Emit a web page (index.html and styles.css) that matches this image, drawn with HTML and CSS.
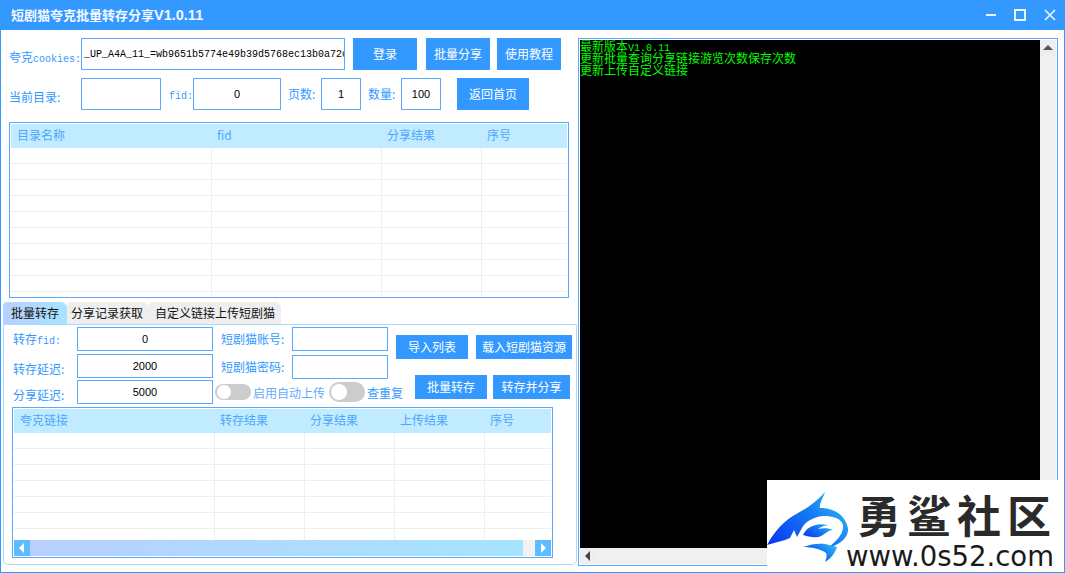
FILE: index.html
```html
<!DOCTYPE html>
<html lang="zh-CN">
<head>
<meta charset="utf-8">
<title>短剧猫夸克批量转存分享</title>
<link rel="stylesheet" href="styles.css">
</head>
<body>
<div class="window">
  <header class="titlebar">
    <h1 class="title">短剧猫夸克批量转存分享<span class="title-ver">V1.0.11</span></h1>
    <div class="winctl">
      <svg width="10" height="12" viewBox="0 0 10 12"><rect x="0" y="5" width="10" height="2" fill="#fff" opacity=".9"/></svg>
      <svg width="12" height="12" viewBox="0 0 12 12"><rect x="1" y="1" width="10" height="10" fill="none" stroke="#fff" stroke-width="2" opacity=".9"/></svg>
      <svg width="12" height="12" viewBox="0 0 12 12"><path d="M1 1L11 11M11 1L1 11" stroke="#fff" stroke-width="1.6" opacity=".9"/></svg>
    </div>
  </header>
  <main class="main">
    <section class="left">
      <div class="row">
        <label class="lbl lbl-a">夸克<span class="latin">cookies:</span></label>
        <input class="inp inp-cookie" value="_UP_A4A_11_=wb9651b5774e49b39d5768ec13b0a72c">
        <button class="btn b64 ml8">登录</button>
        <button class="btn b64 ml9">批量分享</button>
        <button class="btn b64 ml7">使用教程</button>
      </div>
      <div class="row row2">
        <label class="lbl lbl-a">当前目录:</label>
        <input class="inp w80" value="">
        <label class="lbl lbl-fid"><span class="latin">fid:</span></label>
        <input class="inp w88" value="0">
        <label class="lbl lbl-page">页数:</label>
        <input class="inp w40" value="1">
        <label class="lbl lbl-page">数量:</label>
        <input class="inp w40" value="100">
        <button class="btn b72 ml16">返回首页</button>
      </div>
      <div class="grid grid-top">
        <table class="tbl">
          <colgroup><col class="c201"><col class="c170"><col class="c100"><col></colgroup>
          <thead><tr><th>目录名称</th><th>fid</th><th>分享结果</th><th>序号</th></tr></thead>
          <tbody>
            <tr><td></td><td></td><td></td><td></td></tr>
            <tr><td></td><td></td><td></td><td></td></tr>
            <tr><td></td><td></td><td></td><td></td></tr>
            <tr><td></td><td></td><td></td><td></td></tr>
            <tr><td></td><td></td><td></td><td></td></tr>
            <tr><td></td><td></td><td></td><td></td></tr>
            <tr><td></td><td></td><td></td><td></td></tr>
            <tr><td></td><td></td><td></td><td></td></tr>
            <tr><td></td><td></td><td></td><td></td></tr>
            <tr><td></td><td></td><td></td><td></td></tr>
          </tbody>
        </table>
      </div>
      <nav class="tabs">
        <span class="tab tab-on t64">批量转存</span>
        <span class="tab t82">分享记录获取</span>
        <span class="tab t132">自定义链接上传短剧猫</span>
      </nav>
      <div class="panel">
        <div class="panel-top">
          <div class="col1">
            <div class="f"><label class="lbl lbl-f">转存<span class="latin">fid:</span></label><input class="inp w136 h24" value="0"></div>
            <div class="f f2"><label class="lbl lbl-f lbl-low">转存延迟:</label><input class="inp w136 h24" value="2000"></div>
            <div class="f f3"><label class="lbl lbl-f lbl-low">分享延迟:</label><input class="inp w136 h24" value="5000"></div>
          </div>
          <div class="col2">
            <div class="f"><label class="lbl lbl-acc">短剧猫账号:</label><input class="inp w96 h24" value=""></div>
            <div class="f f4"><label class="lbl lbl-acc">短剧猫密码:</label><input class="inp w96 h24" value=""></div>
            <div class="toggles">
              <span class="toggle"></span><span class="lbl tg-l1">启用自动上传</span>
              <span class="toggle toggle-lg"></span><span class="lbl tg-l2">查重复</span>
            </div>
          </div>
          <div class="col3">
            <div class="brow">
              <button class="btn b72 h24">导入列表</button>
              <button class="btn b96 h24 ml8">载入短剧猫资源</button>
            </div>
            <div class="brow brow2">
              <button class="btn b72 h24">批量转存</button>
              <button class="btn b77 h24 ml6">转存并分享</button>
            </div>
          </div>
        </div>
        <div class="grid grid-bot">
          <div class="grid-clip">
            <table class="tbl">
              <colgroup><col class="c201"><col class="c90"><col class="c90"><col class="c90"><col></colgroup>
              <thead><tr><th>夸克链接</th><th>转存结果</th><th>分享结果</th><th>上传结果</th><th>序号</th></tr></thead>
              <tbody>
                <tr><td></td><td></td><td></td><td></td><td></td></tr>
                <tr><td></td><td></td><td></td><td></td><td></td></tr>
                <tr><td></td><td></td><td></td><td></td><td></td></tr>
                <tr><td></td><td></td><td></td><td></td><td></td></tr>
                <tr><td></td><td></td><td></td><td></td><td></td></tr>
                <tr><td></td><td></td><td></td><td></td><td></td></tr>
                <tr><td></td><td></td><td></td><td></td><td></td></tr>
              </tbody>
            </table>
          </div>
          <div class="hbar">
            <span class="hbtn"><svg width="6" height="10" viewBox="0 0 6 10"><path d="M5 0V10L0 5Z" fill="#fff"/></svg></span>
            <span class="hthumb"></span>
            <span class="hbtn"><svg width="6" height="10" viewBox="0 0 6 10"><path d="M1 0V10L6 5Z" fill="#fff"/></svg></span>
          </div>
        </div>
      </div>
    </section>
    <aside class="console">
      <div class="console-body">
        <div class="log">
          <div class="logline">最新版本<span class="latin">V1.0.11</span></div>
          <div class="logline">更新批量查询分享链接游览次数保存次数</div>
          <div class="logline">更新上传自定义链接</div>
        </div>
        <div class="vbar">
          <span class="sbtn"><svg width="10" height="6" viewBox="0 0 10 6"><path d="M5 0L10 5H0Z" fill="#555"/></svg></span>
        </div>
      </div>
      <div class="cbar">
        <span class="sbtn"><svg width="6" height="10" viewBox="0 0 6 10"><path d="M5 0V10L0 5Z" fill="#444"/></svg></span>
      </div>
    </aside>
  </main>
  <div class="watermark">
    <svg class="shark" width="90" height="93" viewBox="0 10 90 93">
      <defs><linearGradient id="sh" x1="0" y1="0.8" x2="1" y2="0.2"><stop offset="0" stop-color="#0a3cf0"/><stop offset=".55" stop-color="#1478f5"/><stop offset="1" stop-color="#2fb8f5"/></linearGradient></defs>
      <path fill="url(#sh)" d="M0 75C8 60 18 50 31 43C40 38 48 33 58 22C56 28 52 34 53 38C66 38 78 44 81 58C82 66 75 74 61 78C68 72 77 65 76 55C74 48 66 46 56 46C46 47 38 52 35 58L30 67L27 60L23 68L18 70Z"/>
      <path fill="url(#sh)" d="M36 65C39 58 48 52 61 55C56 56 53 57 51 59C56 58 62 58 66 60C60 60 57 66 51 67C46 68 40 66 36 65Z"/>
      <path fill="url(#sh)" d="M36 77C44 74 52 73 58 74L70 77C68 84 62 90 58 92C60 87 60 84 59 83C54 79 44 77 36 77Z"/>
    </svg>
    <div class="wm-text">
      <div class="wm-cn">勇鲨社区</div>
      <div class="wm-url">www.0s52.com</div>
    </div>
  </div>
</div>
</body>
</html>
```
FILE: styles.css
```css
* { box-sizing: border-box; }
html, body { margin: 0; padding: 0; }
body { font-family: "Noto Sans CJK SC", "Liberation Sans", sans-serif; font-size: 12px; background: #fff; overflow: hidden; }
.window { position: relative; width: 1065px; height: 573px; border: 1px solid #3399ff; border-top: 0; background: #fff; overflow: hidden; }
.titlebar { height: 30px; background: #3399ff; display: flex; align-items: center; justify-content: space-between; padding: 0 8px 0 10px; }
.title { margin: 0; font-size: 13px; font-weight: 700; color: #f2f8ff; line-height: 30px; font-family: "Noto Sans CJK SC", sans-serif; white-space: nowrap; }
.title-ver { font-family: "Liberation Sans", sans-serif; font-size: 14.5px; }
.winctl { display: flex; gap: 18px; align-items: center; }
.main { display: flex; padding-top: 8px; }
.left { width: 577px; flex: none; }
.row { display: flex; height: 32px; padding-left: 8px; align-items: stretch; }
.row2 { margin-top: 8px; }
.lbl { color: #3399ff; font-size: 12px; line-height: 16px; white-space: nowrap; display: block; }
.latin { font-family: "Liberation Mono", monospace; font-size: 10px; }
.lbl-a { width: 72px; padding-top: 11px; }
.lbl-fid { width: 24px; margin-left: 8px; padding-top: 8px; }
.lbl-page { width: 33px; margin-left: 7px; padding-top: 8px; }
.inp { border: 1px solid #5ba8ff; background: #fff; color: #000; font-family: "Liberation Sans", sans-serif; font-size: 11px; text-align: center; padding: 0; outline: 0; border-radius: 0; }
.inp-cookie { width: 264px; text-align: left; padding: 0 0 0 2px; font-family: "Liberation Mono", monospace; font-size: 10px; }
.w80 { width: 80px; } .w88 { width: 88px; } .w40 { width: 40px; } .w136 { width: 136px; } .w96 { width: 96px; }
.h24 { height: 24px; }
.btn { border: 0; background: #3399ff; color: #fff; font-family: "Noto Sans CJK SC", sans-serif; font-size: 12px; padding: 0 0 2px; white-space: nowrap; }
.b64 { width: 64px; } .b72 { width: 72px; } .b96 { width: 96px; } .b77 { width: 77px; }
.ml6 { margin-left: 6px; } .ml7 { margin-left: 7px; } .ml8 { margin-left: 8px; } .ml9 { margin-left: 9px; } .ml16 { margin-left: 16px; }
.grid { border: 1px solid #5ba8ff; padding: 1px; background: #fff; overflow: hidden; }
.grid-top { width: 560px; height: 176px; margin: 12px 0 0 8px; }
.tbl { width: 100%; border-collapse: separate; border-spacing: 0; table-layout: fixed; }
.c201 { width: 201px; } .c170 { width: 170px; } .c100 { width: 100px; } .c90 { width: 90px; }
.tbl th { height: 24px; padding: 0 0 3px 6px; background: #c1ecff; color: #4da6ff; font-weight: 400; font-size: 12px; text-align: left; line-height: 16px; }
.tbl th + th { padding-left: 5px; }
.tbl td { height: 16px; padding: 0; border-bottom: 1px solid #eeeeee; border-right: 1px solid #eeeeee; }
.tbl td:last-child { border-right: 0; }
.tabs { display: flex; margin: 4px 0 0 2px; height: 22px; }
.tab { display: block; height: 22px; background: #eeeeee; color: #111; font-size: 12px; line-height: 22px; text-align: center; border-radius: 4px 6px 0 0; }
.tab-on { background: linear-gradient(90deg, #b8d0ff, #a6e4ff); }
.t64 { width: 64px; } .t82 { width: 82px; padding-right: 2px; } .t132 { width: 132px; }
.panel { width: 574px; height: 241px; margin-left: 2px; border: 1px solid #a8dcff; border-radius: 0 0 5px 5px; }
.panel-top { display: flex; height: 82px; padding-top: 2px; }
.col1 { width: 211px; padding-left: 9px; flex: none; }
.col2 { width: 181px; flex: none; }
.col3 { flex: none; padding-top: 8px; }
.f { display: flex; height: 24px; }
.f2 { margin-top: 3px; }
.f3 { margin-top: 2px; }
.f4 { margin-top: 4px; }
.lbl-f { width: 64px; padding-top: 4px; }
.lbl-low { padding-top: 7px; }
.lbl-acc { width: 77px; padding: 4px 0 0 6px; }
.toggles { display: flex; align-items: center; height: 20px; margin-top: 3px; white-space: nowrap; }
.toggle { display: block; width: 36px; height: 16px; border-radius: 8px; background: #cccccc; flex: none; padding: 1px 0 0 2px; }
.toggle::before { content: ""; display: block; width: 14px; height: 14px; border-radius: 50%; background: #fff; }
.toggle-lg { height: 20px; border-radius: 10px; margin-left: 4px; padding: 2px 0 0 2px; }
.toggle-lg::before { width: 16px; height: 16px; }
.tg-l1 { margin-left: 2px; color: #66aaff; padding-top: 2px; }
.tg-l2 { margin-left: 2px; padding-top: 2px; }
.brow { display: flex; }
.brow2 { margin: 16px 0 0 19px; }
.grid-bot { width: 541px; height: 151px; margin-left: 8px; display: flex; flex-direction: column; }
.grid-clip { flex: 1; overflow: hidden; min-height: 0; }
.hbar { display: flex; height: 16px; flex: none; background: #f2f2f2; }
.hbtn { width: 16px; flex: none; background: #5cbcff; display: flex; align-items: center; justify-content: center; }
.hthumb { width: 493px; margin-right: 12px; background: linear-gradient(90deg, #b8d0ff, #a6e4ff); }
.console { width: 480px; height: 528px; flex: none; border: 1px solid #5ba8ff; padding: 1px; display: flex; flex-direction: column; }
.console-body { flex: 1; display: flex; min-height: 0; }
.log { flex: 1; background: #000; color: #00ff00; font-size: 12px; line-height: 12px; overflow: hidden; }
.logline { height: 12px; line-height: 12px; white-space: nowrap; }
.vbar { width: 16px; flex: none; background: #f0f0f0; }
.sbtn { display: flex; width: 16px; height: 16px; align-items: center; justify-content: center; background: #eeeeee; }
.cbar { height: 16px; flex: none; background: #f0f0f0; }
.watermark { position: absolute; left: 766px; top: 480px; width: 300px; height: 93px; background: #fff; display: flex; }
.shark { flex: none; }
.wm-text { margin-left: -11px; }
.wm-cn { margin-top: 8px; font-size: 44px; font-weight: 700; line-height: 52px; letter-spacing: 6px; color: #2a2a2a; padding-left: 11px; white-space: nowrap; }
.wm-url { font-family: "DejaVu Sans", sans-serif; font-size: 27.5px; line-height: 32px; color: #1a1a1a; white-space: nowrap; }
```
